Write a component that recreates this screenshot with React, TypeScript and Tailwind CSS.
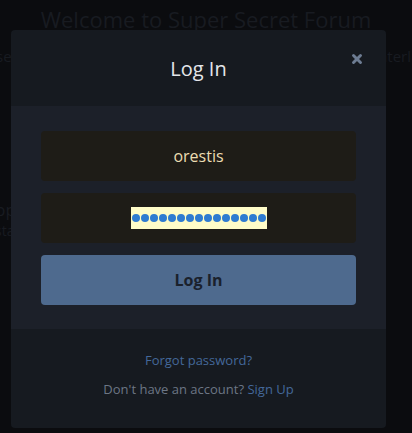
import { X } from 'lucide-react';

export default function App() {
  const dots = Array.from({ length: 15 });

  return (
    <div className="relative w-[412px] h-[433px] overflow-hidden bg-[#0b0c0f] font-['Open_Sans',sans-serif]">
      {/* page behind the modal */}
      <div className="flex flex-col text-[#181b21]">
        <h1 className="text-[22px] leading-[32px] mt-[3px] text-center whitespace-nowrap">Welcome to Super Secret Forum</h1>
        <div className="flex justify-between text-[15px] leading-[20px] mt-[11px]">
          <span className="-ml-[4px]">se</span>
          <span className="mr-[1px]">aterl</span>
        </div>
        <div className="flex flex-col text-[17px] leading-[22px] mt-[133px] -ml-[5px]">
          <span>pp</span>
          <span className="text-[14px] leading-[20px]">sta</span>
        </div>
      </div>

      {/* modal */}
      <div className="absolute left-[11px] top-[30px] w-[375px] rounded-[4px] overflow-hidden">
        <div className="relative h-[76px] bg-[#161a20] flex items-center justify-center">
          <h2 className="text-[20px] text-[#e4e6ea] mt-[2px]">Log In</h2>
          <X className="absolute right-[22px] top-[22px] w-[14px] h-[14px] text-[#6d7c92]" strokeWidth={5} />
        </div>

        <div className="bg-[#1c2029] px-[30px] pt-[25px] pb-[24px] flex flex-col gap-[12px]">
          <div className="h-[50px] rounded-[4px] bg-[#1e1c17] flex items-center justify-center text-[16px] text-[#ecdcb2]">
            orestis
          </div>
          <div className="h-[50px] rounded-[4px] bg-[#1e1c17] flex items-center justify-center">
            <span className="h-[22px] bg-[#fffcc8] flex items-center gap-[1px] px-[1px] ml-[1px]">
              {dots.map((_, i) => (
                <span key={i} className="w-[8px] h-[8px] rounded-full bg-[#2f7bd1]" />
              ))}
            </span>
          </div>
          <button className="h-[50px] rounded-[4px] bg-[#4e6a8e] text-[16px] font-bold text-[#1a212c]">
            Log In
          </button>
        </div>

        <div className="bg-[#161a20] h-[99px] flex flex-col items-center pt-[22px] gap-[9px] text-[13px]">
          <a className="text-[#44689a]">Forgot password?</a>
          <p className="text-[#6c7685]">
            Don't have an account? <a className="text-[#44689a]">Sign Up</a>
          </p>
        </div>
      </div>
    </div>
  );
}
